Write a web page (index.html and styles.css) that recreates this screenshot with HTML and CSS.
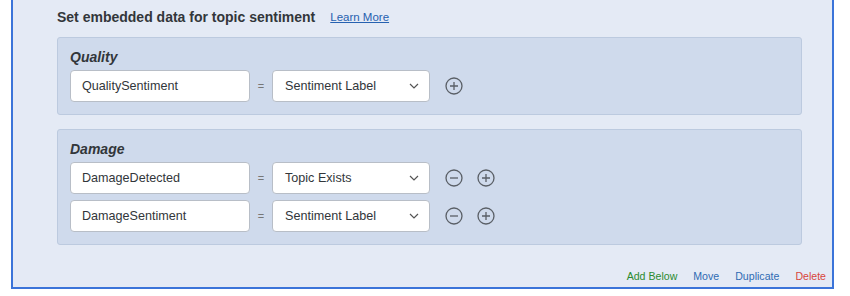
FILE: index.html
```html
<!DOCTYPE html>
<html lang="en">
<head>
  <meta charset="UTF-8">
  <title>Set embedded data for topic sentiment</title>
  <link rel="stylesheet" href="styles.css">
</head>
<body>
  <div class="panel">
    <div class="title">
      <span>Set embedded data for topic sentiment</span>
      <a href="#" class="learn">Learn More</a>
    </div>

    <div class="group">
      <div class="group-label">Quality</div>
      <div class="row">
        <div class="field">QualitySentiment</div>
        <span class="eq">=</span>
        <div class="select">Sentiment Label
          <svg class="chev" width="10" height="6" viewBox="0 0 10 6"><path d="M1 1l4 4 4-4" fill="none" stroke="#555" stroke-width="1.2"/></svg>
        </div>
        <div class="icons">
          <svg class="ic" width="18" height="18" viewBox="0 0 18 18"><circle cx="9" cy="9" r="8" fill="none" stroke="#5a5f66" stroke-width="1.3"/><path d="M5 9h8M9 5v8" stroke="#5a5f66" stroke-width="1.3"/></svg>
        </div>
      </div>
    </div>

    <div class="group">
      <div class="group-label">Damage</div>
      <div class="row">
        <div class="field">DamageDetected</div>
        <span class="eq">=</span>
        <div class="select">Topic Exists
          <svg class="chev" width="10" height="6" viewBox="0 0 10 6"><path d="M1 1l4 4 4-4" fill="none" stroke="#555" stroke-width="1.2"/></svg>
        </div>
        <div class="icons">
          <svg class="ic" width="18" height="18" viewBox="0 0 18 18"><circle cx="9" cy="9" r="8" fill="none" stroke="#5a5f66" stroke-width="1.3"/><path d="M5 9h8" stroke="#5a5f66" stroke-width="1.3"/></svg>
          <svg class="ic" width="18" height="18" viewBox="0 0 18 18"><circle cx="9" cy="9" r="8" fill="none" stroke="#5a5f66" stroke-width="1.3"/><path d="M5 9h8M9 5v8" stroke="#5a5f66" stroke-width="1.3"/></svg>
        </div>
      </div>
      <div class="row">
        <div class="field">DamageSentiment</div>
        <span class="eq">=</span>
        <div class="select">Sentiment Label
          <svg class="chev" width="10" height="6" viewBox="0 0 10 6"><path d="M1 1l4 4 4-4" fill="none" stroke="#555" stroke-width="1.2"/></svg>
        </div>
        <div class="icons">
          <svg class="ic" width="18" height="18" viewBox="0 0 18 18"><circle cx="9" cy="9" r="8" fill="none" stroke="#5a5f66" stroke-width="1.3"/><path d="M5 9h8" stroke="#5a5f66" stroke-width="1.3"/></svg>
          <svg class="ic" width="18" height="18" viewBox="0 0 18 18"><circle cx="9" cy="9" r="8" fill="none" stroke="#5a5f66" stroke-width="1.3"/><path d="M5 9h8M9 5v8" stroke="#5a5f66" stroke-width="1.3"/></svg>
        </div>
      </div>
    </div>

    <div class="actions">
      <a href="#" class="add">Add Below</a>
      <a href="#">Move</a>
      <a href="#">Duplicate</a>
      <a href="#" class="del">Delete</a>
    </div>
  </div>
</body>
</html>
```

FILE: styles.css
```css
body {
  margin: 0;
  background: white;
  font-family: "Liberation Sans", Arial, sans-serif;
  color: #32363a;
}

.panel {
  margin-left: 11px;
  width: 819px;
  height: 287px;
  background: #e4eaf5;
  border: 2px solid #3b74d9;
  border-top: none;
  display: flex;
  flex-direction: column;
}

.title {
  margin: 7px 30px 10px 44px;
  height: 20px;
  display: flex;
  align-items: center;
  gap: 15px;
  font-size: 14px;
  font-weight: bold;
}

.learn {
  font-size: 11.5px;
  font-weight: normal;
  color: #2661b0;
  text-decoration: underline;
}

.group {
  margin: 0 30px 14px 44px;
  background: #cfdaec;
  border: 1px solid #bccadf;
  border-radius: 3px;
  padding: 10px 12px 12px;
  display: flex;
  flex-direction: column;
  gap: 6px;
}

.group-label {
  font-size: 14px;
  font-weight: bold;
  font-style: italic;
  line-height: 18px;
  margin-bottom: -2px;
}

.row {
  display: flex;
  align-items: center;
}

.field, .select {
  height: 32px;
  box-sizing: border-box;
  background: white;
  border: 1px solid #b8bec7;
  border-radius: 4px;
  font-size: 12.6px;
  display: flex;
  align-items: center;
}

.field {
  width: 180px;
  padding-left: 11px;
}

.eq {
  width: 22px;
  text-align: center;
  font-size: 11px;
  color: #777;
}

.select {
  width: 158px;
  padding: 0 10px 0 12px;
  justify-content: space-between;
}

.icons {
  display: flex;
  gap: 14px;
  margin-left: 15px;
}

.ic {
  display: block;
}

.actions {
  margin-top: auto;
  margin-bottom: 3px;
  height: 16px;
  display: flex;
  justify-content: flex-end;
  align-items: center;
  gap: 16px;
  padding-right: 6px;
  font-size: 10.6px;
}

.actions a {
  color: #2f6ab3;
  text-decoration: none;
}

.actions .add {
  color: #2b8a2f;
}

.actions .del {
  color: #d8453b;
}
```
